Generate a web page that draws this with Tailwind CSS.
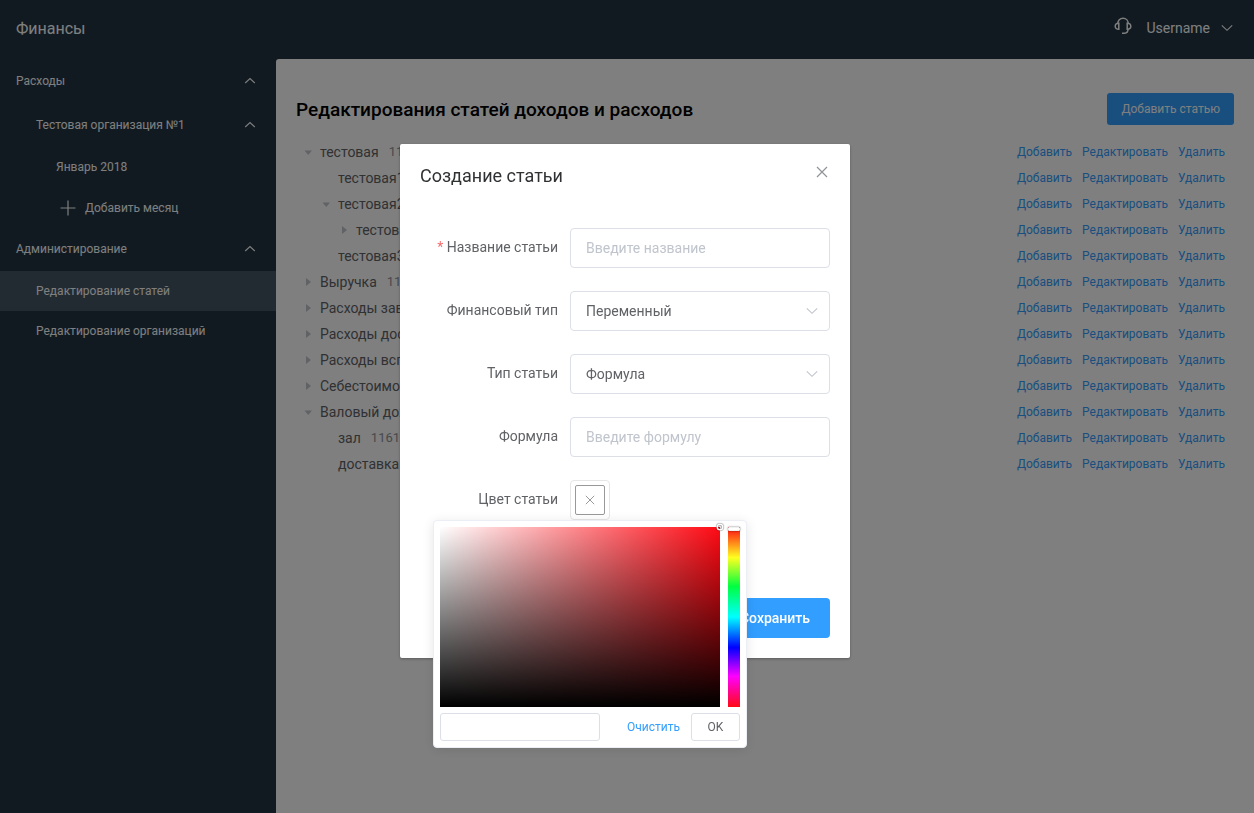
<!DOCTYPE html>
<html lang="ru">
<head>
<meta charset="utf-8">
<meta name="viewport" content="width=device-width, initial-scale=1">
<title>Финансы</title>
<script src="https://cdn.jsdelivr.net/npm/@tailwindcss/browser@4"></script>
</head>
<body class="flex min-h-screen flex-col bg-[#223543] font-[Roboto,'Liberation_Sans',sans-serif] text-sm text-[#606266]">

<svg class="hidden" aria-hidden="true">
  <symbol id="up" viewBox="0 0 12 12"><path d="M1.200 8 6 3.600 10.800 8" fill="none" stroke="currentColor" stroke-width="1.100"/></symbol>
  <symbol id="down" viewBox="0 0 12 12"><path d="M.8 3.300 6 8.300l5.200-5" fill="none" stroke="currentColor" stroke-width="1.100"/></symbol>
  <symbol id="cross" viewBox="0 0 12 12"><path d="m1 1 10 10M11 1 1 11" fill="none" stroke="currentColor" stroke-width="1.200"/></symbol>
  <symbol id="caret-down" viewBox="0 0 8 8"><path d="M.5 2.500h7.500L4.250 7z" fill="currentColor"/></symbol>
  <symbol id="caret-right" viewBox="0 0 8 8"><path d="M2 0v8l5-4z" fill="currentColor"/></symbol>
</svg>

<header class="flex h-[59px] items-center justify-between pr-[21px] pb-[3px] pl-4 text-white">
  <span class="pt-0.5 text-base">Финансы</span>
  <div class="flex items-center">
    <svg class="mr-[14px] mb-1 size-[18px]" viewBox="0 0 18 18" fill="none" stroke="currentColor" stroke-width="1.500" role="img" aria-label="Поддержка">
      <path d="M3.800 6.500C3.800 3.500 6 1.300 9 1.300s5.200 2.200 5.200 5.200"/>
      <path d="M4.800 6.200v6.100C2.500 12.300 1.200 11.200 1.200 9.300S2.500 6.200 4.800 6.200zM13.200 6.200v6.100c2.300 0 3.600-1.100 3.600-3s-1.300-3.100-3.600-3.100z"/>
      <path d="M14 12.300c0 2.400-1.300 3.900-3.400 3.900H8"/>
    </svg>
    <button class="flex items-center gap-[11px]">Username
      <svg class="size-3"><use href="#down"/></svg>
    </button>
  </div>
</header>

<div class="flex flex-1">
  <nav class="w-[276px] shrink-0 text-xs text-white">
    <button class="flex h-11 w-full items-center justify-between pr-5 pl-4">Расходы <svg class="size-3"><use href="#up"/></svg></button>
    <button class="flex h-11 w-full items-center justify-between pr-5 pl-9">Тестовая организация №1 <svg class="size-3"><use href="#up"/></svg></button>
    <a href="#" class="flex h-10 items-center pl-14">Январь 2018</a>
    <button class="flex h-[42px] w-full items-center gap-[9px] pl-[60px]"><svg class="size-4" viewBox="0 0 16 16"><path d="M8 .5v15M.5 8h15" fill="none" stroke="currentColor" stroke-width="1.200"/></svg>Добавить месяц</button>
    <button class="mb-0.5 flex h-10 w-full items-center justify-between pr-5 pl-4">Администирование <svg class="size-3"><use href="#up"/></svg></button>
    <a href="#" class="flex h-10 items-center bg-[#445663] pl-9" aria-current="page">Редактирование статей</a>
    <a href="#" class="flex h-10 items-center pl-9">Редактирование организаций</a>
  </nav>

  <main class="min-w-0 flex-1 rounded-tl-[3px] bg-white px-5 pt-[34px]">
    <div class="mb-[14px] flex items-center justify-between">
      <h1 class="pt-0.5 text-[19px] leading-7 font-medium text-black">Редактирования статей доходов и расходов</h1>
      <button class="h-8 rounded-[3px] bg-[#329eff] px-[14px] text-xs text-white">Добавить статью</button>
    </div>
    <ul id="tree"></ul>
  </main>
</div>

<template id="row">
  <li class="flex h-[26px] items-center pr-[9px]">
    <svg class="mx-2 size-2 text-[#c0c4cc]"><use/></svg>
    <span class="name"></span>
    <span class="code ml-[10px] text-[13px] text-[#909399]"></span>
    <span class="ml-auto flex gap-2.5 text-xs text-[#329eff]">
      <button>Добавить</button><button>Редактировать</button><button>Удалить</button>
    </span>
  </li>
</template>

<div class="fixed inset-0 flex items-start justify-center bg-black/50 pt-36 pr-1">
  <section role="dialog" aria-modal="true" aria-labelledby="dlg-title" class="w-[450px] rounded-xs bg-white px-5 pb-5 shadow-[0_1px_3px_rgba(0,0,0,0.3)]">
    <div class="flex items-start justify-between pt-5">
      <h2 id="dlg-title" class="text-lg leading-6 text-[#303133]">Создание статьи</h2>
      <button class="p-0.5 text-[#909399]" aria-label="Закрыть"><svg class="size-3"><use href="#cross"/></svg></button>
    </div>
    <form class="mt-10 grid grid-cols-[138px_1fr] gap-x-3 gap-y-[23px]">
      <label for="name" class="pt-[9px] text-right"><span class="text-[#f56c6c]">*</span> Название статьи</label>
      <input id="name" type="text" placeholder="Введите название" class="h-10 min-w-0 rounded border border-[#dcdfe6] px-[15px] placeholder:text-[#c0c4cc]">

      <label for="fin" class="pt-[9px] text-right">Финансовый тип</label>
      <div class="relative">
        <select id="fin" class="h-10 w-full appearance-none rounded border border-[#dcdfe6] bg-white px-[15px]"><option>Переменный</option></select>
        <svg class="pointer-events-none absolute top-[14px] right-3 size-3 text-[#c0c4cc]"><use href="#down"/></svg>
      </div>

      <label for="kind" class="pt-[9px] text-right">Тип статьи</label>
      <div class="relative">
        <select id="kind" class="h-10 w-full appearance-none rounded border border-[#dcdfe6] bg-white px-[15px]"><option>Формула</option></select>
        <svg class="pointer-events-none absolute top-[14px] right-3 size-3 text-[#c0c4cc]"><use href="#down"/></svg>
      </div>

      <label for="formula" class="pt-[9px] text-right">Формула</label>
      <input id="formula" type="text" placeholder="Введите формулу" class="h-10 min-w-0 rounded border border-[#dcdfe6] px-[15px] placeholder:text-[#c0c4cc]">

      <label for="color" class="pt-[9px] text-right">Цвет статьи</label>
      <div class="relative flex">
        <button id="color" type="button" aria-label="Цвет статьи" class="size-10 rounded border border-[#e6e6e6] p-1">
          <span class="flex size-full items-center justify-center rounded-xs border border-[#999999] text-[#999999]"><svg class="size-2.5"><use href="#cross"/></svg></span>
        </button>
        <div class="absolute top-full -left-[137px] z-10 w-[314px] rounded border border-[#ebeef5] bg-white p-1.5 shadow-[0_2px_12px_rgba(0,0,0,0.1)]">
          <div class="flex justify-between">
            <div class="relative h-[180px] w-[280px] bg-[linear-gradient(to_top,#000,transparent),linear-gradient(to_right,#fff,#ff0a14)]">
              <span class="absolute -top-0.5 -right-0.5 size-1 rounded-full shadow-[0_0_0_1.5px_#fff,inset_0_0_1px_1px_rgba(0,0,0,0.3),0_0_1px_2px_rgba(0,0,0,0.4)]"></span>
            </div>
            <input type="range" min="0" max="360" value="0" aria-label="Оттенок" class="m-0 h-[180px] w-3 appearance-none bg-[linear-gradient(to_bottom,#ff0a14_0%,#ffff20_17%,#00ff40_33%,#00ffff_50%,#0000ff_67%,#ff00ff_83%,#ff0a14_100%)] [writing-mode:vertical-lr] [&::-webkit-slider-thumb]:h-1 [&::-webkit-slider-thumb]:w-3 [&::-webkit-slider-thumb]:appearance-none [&::-webkit-slider-thumb]:rounded-[1px] [&::-webkit-slider-thumb]:border [&::-webkit-slider-thumb]:border-[#f0f0f0] [&::-webkit-slider-thumb]:bg-white [&::-webkit-slider-thumb]:shadow-[0_0_2px_rgba(0,0,0,0.6)]">
          </div>
          <div class="mt-1.5 flex items-center text-xs">
            <input type="text" aria-label="Код цвета" class="h-7 w-40 rounded-[3px] border border-[#dcdfe6] px-2">
            <button type="button" class="mr-[11px] ml-auto text-[#329eff]">Очистить</button>
            <button type="button" class="h-7 w-[49px] rounded-[3px] border border-[#dcdfe6]">OK</button>
          </div>
        </div>
      </div>
    </form>
    <div class="mt-[78px] flex justify-end">
      <button class="h-10 rounded bg-[#329eff] px-5 font-medium text-white">Сохранить</button>
    </div>
  </section>
</div>

<script>
  // [depth, state, name, code]
  const rows = [
    [0, 'down', 'тестовая', '1161'],
    [1, '', 'тестовая1', ''],
    [1, 'down', 'тестовая2', ''],
    [2, 'right', 'тестовая', ''],
    [1, '', 'тестовая3', ''],
    [0, 'right', 'Выручка', '1161'],
    [0, 'right', 'Расходы зав', ''],
    [0, 'right', 'Расходы дос', ''],
    [0, 'right', 'Расходы всп', ''],
    [0, 'right', 'Себестоимость', ''],
    [0, 'down', 'Валовый доход', ''],
    [1, '', 'зал', '1161'],
    [1, '', 'доставка', '']
  ];
  const tree = document.getElementById('tree');
  for (const [depth, state, name, code] of rows) {
    const li = document.getElementById('row').content.cloneNode(true).firstElementChild;
    li.style.paddingLeft = depth * 18 + 'px';
    if (state) li.querySelector('use').setAttribute('href', '#caret-' + state);
    li.querySelector('.name').textContent = name;
    li.querySelector('.code').textContent = code;
    tree.append(li);
  }
</script>
</body>
</html>
